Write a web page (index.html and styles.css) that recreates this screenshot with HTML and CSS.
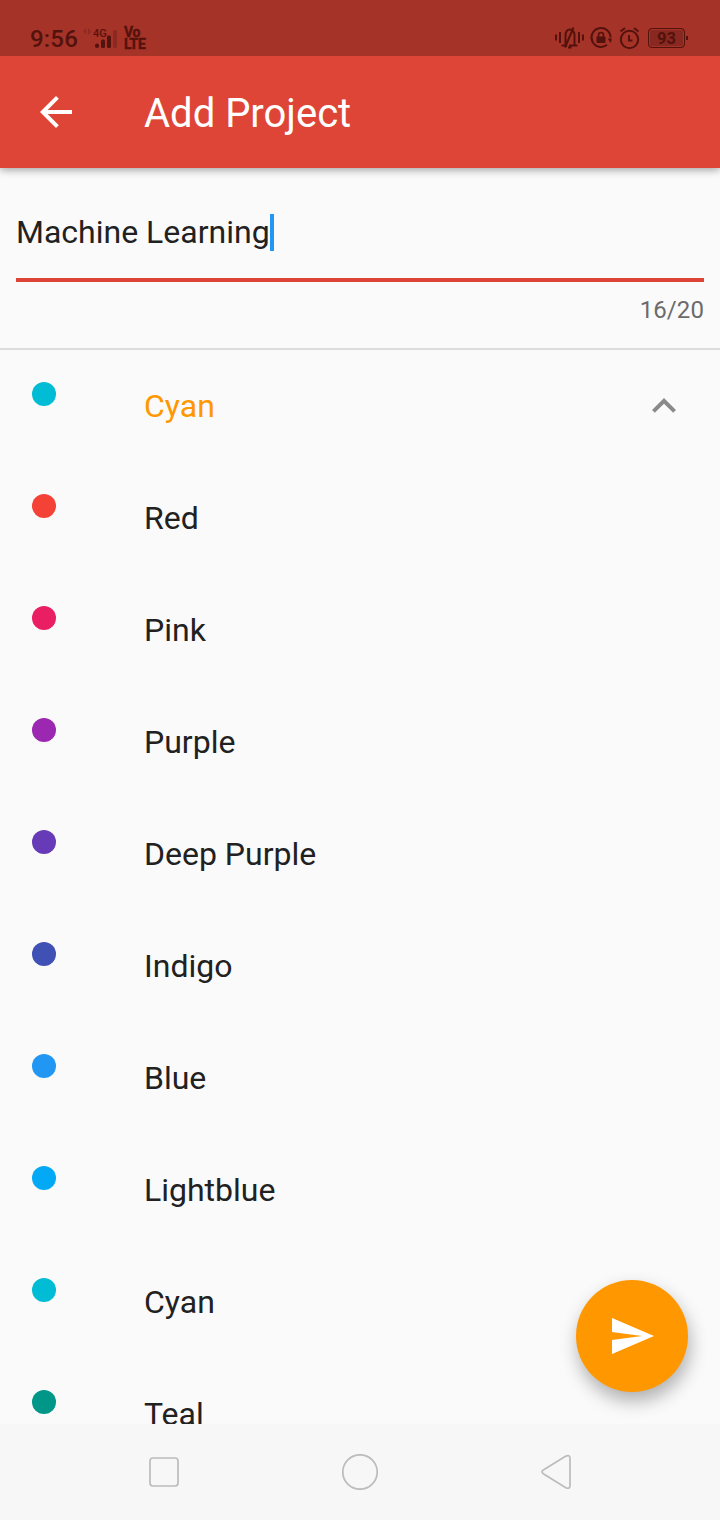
FILE: index.html
```html
<!DOCTYPE html>
<html lang="en">
<head>
<meta charset="utf-8">
<title>Add Project</title>
<link rel="stylesheet" href="styles.css">
</head>
<body>
<div class="screen">
  <div class="status">
    <span class="clock">9:56</span>
    <svg class="data" width="10" height="10" viewBox="0 0 10 10"><path d="M3.300 1v7L0 4.500zM5 1v7l3.300-3.500z"/></svg>
    <div class="signal">
      <span class="net">4G</span>
      <svg width="24" height="20" viewBox="0 0 24 20"><rect x="1" y="14.500" width="4" height="4.500" rx="2"/><rect x="7" y="10.500" width="4" height="8.500" rx="1.500"/><rect x="13" y="6.500" width="4" height="12.500" rx="1.500"/><rect class="weak" x="19" y="1" width="4" height="18" rx="1.500"/></svg>
    </div>
    <div class="volte"><span>Vo</span><span>LTE</span></div>
    <div class="status-icons">
      <svg width="30" height="24" viewBox="0 0 30 24"><path class="line" d="M1 8.500v6M5 6v11M24 6v11M28 8.500v6M6.500 19.500H11l-.5-1V10c0-4 1.500-6.500 4.500-6.500s4.500 2.500 4.500 6.500v8.500l-.5 1h3.500M14 19.500h5.500M18.500 1.500L10 21.500M13 21.500h3.500"/></svg>
      <svg width="24" height="24" viewBox="0 0 24 24"><path class="line" d="M18 18.800A9.500 9.500 0 1 1 21.500 11.500"/><path d="M18.500 12.500h4.300l-1 4.500z"/><rect x="7.500" y="10.500" width="9" height="6.500" rx=".8"/><path class="line thin" d="M9.500 11V9a2.500 2.500 0 0 1 5 0V11"/></svg>
      <svg width="24" height="24" viewBox="0 0 24 24"><circle class="line" cx="12.500" cy="13.500" r="8.700"/><path class="line" d="M12 9v5.500H15.500M3.500 5.500L8 2M17 2L21.500 5.500"/></svg>
      <div class="battery"><span>93</span></div>
    </div>
  </div>
  <header class="appbar">
    <svg class="back" width="48" height="48" viewBox="0 0 24 24"><path d="M20 11H7.830l5.590-5.590L12 4l-8 8 8 8 1.410-1.410L7.830 13H20v-2z"/></svg>
    <h1>Add Project</h1>
  </header>
  <section class="field">
    <div class="input"><span>Machine Learning</span><i class="caret"></i></div>
    <div class="counter">16/20</div>
  </section>
  <ul class="colors">
    <li class="selected"><i class="dot cyan"></i><span>Cyan</span><svg class="chevron" width="48" height="48" viewBox="0 0 24 24"><path d="M12 8l-6 6 1.410 1.410L12 10.830l4.590 4.580L18 14z"/></svg></li>
    <li><i class="dot red"></i><span>Red</span></li>
    <li><i class="dot pink"></i><span>Pink</span></li>
    <li><i class="dot purple"></i><span>Purple</span></li>
    <li><i class="dot deep-purple"></i><span>Deep Purple</span></li>
    <li><i class="dot indigo"></i><span>Indigo</span></li>
    <li><i class="dot blue"></i><span>Blue</span></li>
    <li><i class="dot lightblue"></i><span>Lightblue</span></li>
    <li><i class="dot cyan"></i><span>Cyan</span></li>
    <li><i class="dot teal"></i><span>Teal</span></li>
  </ul>
  <button class="fab" aria-label="Save"><svg width="48" height="48" viewBox="0 0 24 24"><path d="M2.010 21L23 12 2.010 3 2 10l15 2-15 2z"/></svg></button>
  <nav class="navbar">
    <svg width="36" height="36" viewBox="0 0 36 36"><rect x="4" y="4" width="28" height="28" rx="3"/></svg>
    <svg width="36" height="36" viewBox="0 0 36 36"><circle cx="18" cy="18" r="17.200"/></svg>
    <svg width="36" height="36" viewBox="0 0 36 36"><path d="M4.700 15.700L26.500 2.200Q31 .2 31 4.500v27Q31 35.500 26.800 33.700L4.700 20Q1.300 17.700 4.700 15.700z"/></svg>
  </nav>
</div>
</body>
</html>
```
FILE: styles.css
```css
* { box-sizing: border-box; }
body { margin: 0; font-family: Roboto, sans-serif; color: #212121; }
svg { display: block; flex: none; }
.screen {
  position: relative;
  display: flex;
  flex-direction: column;
  width: 720px;
  height: 1520px;
  overflow: hidden;
  background: #fafafa;
}

.status {
  display: flex;
  flex: none;
  height: 56px;
  padding: 20px 35px 0 30px;
  background: #a53328;
  color: #54120d;
  fill: #54120d;
}
.clock { width: 53px; font-size: 24px; font-weight: 500; line-height: 38px; letter-spacing: .2px; }
.data { margin-top: 7px; opacity: .25; }
.signal { display: flex; flex-direction: column; width: 31px; }
.signal svg { margin: -4px 0 0 1px; }
.net { height: 13px; padding-top: 7px; font-size: 11px; font-weight: 500; line-height: 13px; }
.weak { opacity: .3; }
.volte { display: flex; flex-direction: column; padding-top: 6px; font-size: 14px; font-weight: 700; line-height: 12px; letter-spacing: -.4px; -webkit-text-stroke: .4px #54120d; }
.status-icons { display: flex; gap: 4px; margin-left: auto; padding-top: 6px; }
.line { fill: none; stroke: #54120d; stroke-width: 2; }
.thin { stroke-width: 1.600; }
.battery {
  position: relative;
  width: 37px;
  height: 20px;
  margin: 2px 0 0 3px;
  border: 1.500px solid #54120d;
  border-radius: 4px;
  background: #882820;
  box-shadow: inset 0 0 0 1px #a53328;
  font-size: 16.500px;
  font-weight: 700;
  line-height: 20px;
  text-align: center;
}
.battery::after { content: ""; position: absolute; top: 7px; right: -4px; width: 2px; height: 4px; background: #54120d; }

.appbar {
  display: flex;
  flex: none;
  align-items: center;
  height: 112px;
  padding-left: 32px;
  background: #de4536;
  box-shadow: 0 2px 8px rgba(0, 0, 0, .36);
  clip-path: inset(0 0 -16px 0);
  color: #fff;
}
.back { fill: #fff; }
.appbar h1 { margin: 4px 0 0 64px; font-size: 40px; font-weight: 400; line-height: 48px; }

.field { flex: none; height: 182px; padding: 46px 16px 0; border-bottom: 2px solid #dcdcdc; }
.input { display: flex; height: 68px; border-bottom: 4px solid #db4437; font-size: 32px; line-height: 37px; }
.caret { width: 4px; height: 37px; background: #2196f3; }
.counter { padding-top: 14px; color: #6b6b6b; font-size: 24px; line-height: 28px; letter-spacing: .1px; text-align: right; }

.colors { flex: 1; min-height: 0; margin: 0; padding: 0; overflow: hidden; list-style: none; }
.colors li { display: flex; align-items: center; height: 112px; padding: 0 32px; font-size: 32px; line-height: 38px; }
.dot { align-self: flex-start; width: 24px; height: 24px; margin: 32px 88px 0 0; border-radius: 50%; }
.selected { color: #ff9800; }
.chevron { margin-left: auto; fill: #8a8a8a; }
.cyan { background: #00bcd4; }
.red { background: #f44336; }
.pink { background: #e91e63; }
.purple { background: #9c27b0; }
.deep-purple { background: #673ab7; }
.indigo { background: #3f51b5; }
.blue { background: #2196f3; }
.lightblue { background: #03a9f4; }
.teal { background: #009688; }

.fab {
  position: absolute;
  right: 32px;
  bottom: 128px;
  display: flex;
  align-items: center;
  justify-content: center;
  width: 112px;
  height: 112px;
  padding: 0;
  border: 0;
  border-radius: 50%;
  background: #ff9800;
  box-shadow: 2px 9px 18px rgba(0, 0, 0, .3);
}
.fab svg { fill: #fff; }

.navbar { display: flex; flex: none; align-items: center; justify-content: space-between; height: 96px; padding: 0 145px 0 146px; background: #f7f7f7; }
.navbar svg { fill: none; stroke: #bcbcbc; stroke-width: 1.700; }
.navbar svg:nth-child(2) { margin-left: -1px; }
```
